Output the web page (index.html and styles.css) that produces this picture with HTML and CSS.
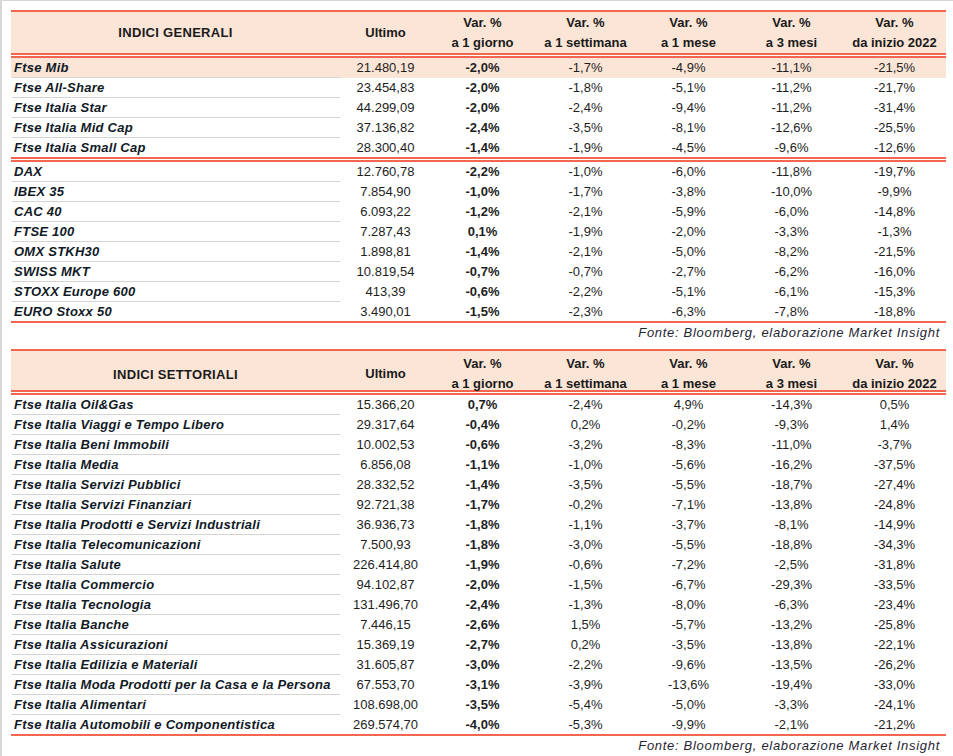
FILE: index.html
```html
<!DOCTYPE html>
<html lang="it">
<head>
<meta charset="utf-8">
<title>Indici</title>
<link rel="stylesheet" href="styles.css">
</head>
<body>
<div class="page">
  <section class="tbl">
    <div class="hdr">
      <div class="h-title">INDICI GENERALI</div>
      <div class="h-one">Ultimo</div>
      <div class="h-two">Var. %<br>a 1 giorno</div>
      <div class="h-two">Var. %<br>a 1 settimana</div>
      <div class="h-two">Var. %<br>a 1 mese</div>
      <div class="h-two">Var. %<br>a 3 mesi</div>
      <div class="h-two">Var. %<br>da inizio 2022</div>
    </div>
    <div class="dbl"></div>
    <div class="grp">
      <div class="row hl"><div class="name">Ftse Mib</div><div class="num">21.480,19</div><div class="num b">-2,0%</div><div class="num">-1,7%</div><div class="num">-4,9%</div><div class="num">-11,1%</div><div class="num">-21,5%</div></div>
      <div class="row"><div class="name">Ftse All-Share</div><div class="num">23.454,83</div><div class="num b">-2,0%</div><div class="num">-1,8%</div><div class="num">-5,1%</div><div class="num">-11,2%</div><div class="num">-21,7%</div></div>
      <div class="row"><div class="name">Ftse Italia Star</div><div class="num">44.299,09</div><div class="num b">-2,0%</div><div class="num">-2,4%</div><div class="num">-9,4%</div><div class="num">-11,2%</div><div class="num">-31,4%</div></div>
      <div class="row"><div class="name">Ftse Italia Mid Cap</div><div class="num">37.136,82</div><div class="num b">-2,4%</div><div class="num">-3,5%</div><div class="num">-8,1%</div><div class="num">-12,6%</div><div class="num">-25,5%</div></div>
      <div class="row"><div class="name">Ftse Italia Small Cap</div><div class="num">28.300,40</div><div class="num b">-1,4%</div><div class="num">-1,9%</div><div class="num">-4,5%</div><div class="num">-9,6%</div><div class="num">-12,6%</div></div>
    </div>
    <div class="dbl"></div>
    <div class="grp">
      <div class="row"><div class="name">DAX</div><div class="num">12.760,78</div><div class="num b">-2,2%</div><div class="num">-1,0%</div><div class="num">-6,0%</div><div class="num">-11,8%</div><div class="num">-19,7%</div></div>
      <div class="row"><div class="name">IBEX 35</div><div class="num">7.854,90</div><div class="num b">-1,0%</div><div class="num">-1,7%</div><div class="num">-3,8%</div><div class="num">-10,0%</div><div class="num">-9,9%</div></div>
      <div class="row"><div class="name">CAC 40</div><div class="num">6.093,22</div><div class="num b">-1,2%</div><div class="num">-2,1%</div><div class="num">-5,9%</div><div class="num">-6,0%</div><div class="num">-14,8%</div></div>
      <div class="row"><div class="name">FTSE 100</div><div class="num">7.287,43</div><div class="num b">0,1%</div><div class="num">-1,9%</div><div class="num">-2,0%</div><div class="num">-3,3%</div><div class="num">-1,3%</div></div>
      <div class="row"><div class="name">OMX STKH30</div><div class="num">1.898,81</div><div class="num b">-1,4%</div><div class="num">-2,1%</div><div class="num">-5,0%</div><div class="num">-8,2%</div><div class="num">-21,5%</div></div>
      <div class="row"><div class="name">SWISS MKT</div><div class="num">10.819,54</div><div class="num b">-0,7%</div><div class="num">-0,7%</div><div class="num">-2,7%</div><div class="num">-6,2%</div><div class="num">-16,0%</div></div>
      <div class="row"><div class="name">STOXX Europe 600</div><div class="num">413,39</div><div class="num b">-0,6%</div><div class="num">-2,2%</div><div class="num">-5,1%</div><div class="num">-6,1%</div><div class="num">-15,3%</div></div>
      <div class="row"><div class="name">EURO Stoxx 50</div><div class="num">3.490,01</div><div class="num b">-1,5%</div><div class="num">-2,3%</div><div class="num">-6,3%</div><div class="num">-7,8%</div><div class="num">-18,8%</div></div>
    </div>
  </section>
  <p class="src">Fonte: Bloomberg, elaborazione Market Insight</p>

  <section class="tbl tbl-second">
    <div class="hdr hdr-short">
      <div class="h-title">INDICI SETTORIALI</div>
      <div class="h-one">Ultimo</div>
      <div class="h-two">Var. %<br>a 1 giorno</div>
      <div class="h-two">Var. %<br>a 1 settimana</div>
      <div class="h-two">Var. %<br>a 1 mese</div>
      <div class="h-two">Var. %<br>a 3 mesi</div>
      <div class="h-two">Var. %<br>da inizio 2022</div>
    </div>
    <div class="dbl"></div>
    <div class="grp">
      <div class="row"><div class="name">Ftse Italia Oil&amp;Gas</div><div class="num">15.366,20</div><div class="num b">0,7%</div><div class="num">-2,4%</div><div class="num">4,9%</div><div class="num">-14,3%</div><div class="num">0,5%</div></div>
      <div class="row"><div class="name">Ftse Italia Viaggi e Tempo Libero</div><div class="num">29.317,64</div><div class="num b">-0,4%</div><div class="num">0,2%</div><div class="num">-0,2%</div><div class="num">-9,3%</div><div class="num">1,4%</div></div>
      <div class="row"><div class="name">Ftse Italia Beni Immobili</div><div class="num">10.002,53</div><div class="num b">-0,6%</div><div class="num">-3,2%</div><div class="num">-8,3%</div><div class="num">-11,0%</div><div class="num">-3,7%</div></div>
      <div class="row"><div class="name">Ftse Italia Media</div><div class="num">6.856,08</div><div class="num b">-1,1%</div><div class="num">-1,0%</div><div class="num">-5,6%</div><div class="num">-16,2%</div><div class="num">-37,5%</div></div>
      <div class="row"><div class="name">Ftse Italia Servizi Pubblici</div><div class="num">28.332,52</div><div class="num b">-1,4%</div><div class="num">-3,5%</div><div class="num">-5,5%</div><div class="num">-18,7%</div><div class="num">-27,4%</div></div>
      <div class="row"><div class="name">Ftse Italia Servizi Finanziari</div><div class="num">92.721,38</div><div class="num b">-1,7%</div><div class="num">-0,2%</div><div class="num">-7,1%</div><div class="num">-13,8%</div><div class="num">-24,8%</div></div>
      <div class="row"><div class="name">Ftse Italia Prodotti e Servizi Industriali</div><div class="num">36.936,73</div><div class="num b">-1,8%</div><div class="num">-1,1%</div><div class="num">-3,7%</div><div class="num">-8,1%</div><div class="num">-14,9%</div></div>
      <div class="row"><div class="name">Ftse Italia Telecomunicazioni</div><div class="num">7.500,93</div><div class="num b">-1,8%</div><div class="num">-3,0%</div><div class="num">-5,5%</div><div class="num">-18,8%</div><div class="num">-34,3%</div></div>
      <div class="row"><div class="name">Ftse Italia Salute</div><div class="num">226.414,80</div><div class="num b">-1,9%</div><div class="num">-0,6%</div><div class="num">-7,2%</div><div class="num">-2,5%</div><div class="num">-31,8%</div></div>
      <div class="row"><div class="name">Ftse Italia Commercio</div><div class="num">94.102,87</div><div class="num b">-2,0%</div><div class="num">-1,5%</div><div class="num">-6,7%</div><div class="num">-29,3%</div><div class="num">-33,5%</div></div>
      <div class="row"><div class="name">Ftse Italia Tecnologia</div><div class="num">131.496,70</div><div class="num b">-2,4%</div><div class="num">-1,3%</div><div class="num">-8,0%</div><div class="num">-6,3%</div><div class="num">-23,4%</div></div>
      <div class="row"><div class="name">Ftse Italia Banche</div><div class="num">7.446,15</div><div class="num b">-2,6%</div><div class="num">1,5%</div><div class="num">-5,7%</div><div class="num">-13,2%</div><div class="num">-25,8%</div></div>
      <div class="row"><div class="name">Ftse Italia Assicurazioni</div><div class="num">15.369,19</div><div class="num b">-2,7%</div><div class="num">0,2%</div><div class="num">-3,5%</div><div class="num">-13,8%</div><div class="num">-22,1%</div></div>
      <div class="row"><div class="name">Ftse Italia Edilizia e Materiali</div><div class="num">31.605,87</div><div class="num b">-3,0%</div><div class="num">-2,2%</div><div class="num">-9,6%</div><div class="num">-13,5%</div><div class="num">-26,2%</div></div>
      <div class="row"><div class="name">Ftse Italia Moda Prodotti per la Casa e la Persona</div><div class="num">67.553,70</div><div class="num b">-3,1%</div><div class="num">-3,9%</div><div class="num">-13,6%</div><div class="num">-19,4%</div><div class="num">-33,0%</div></div>
      <div class="row"><div class="name">Ftse Italia Alimentari</div><div class="num">108.698,00</div><div class="num b">-3,5%</div><div class="num">-5,4%</div><div class="num">-5,0%</div><div class="num">-3,3%</div><div class="num">-24,1%</div></div>
      <div class="row"><div class="name">Ftse Italia Automobili e Componentistica</div><div class="num">269.574,70</div><div class="num b">-4,0%</div><div class="num">-5,3%</div><div class="num">-9,9%</div><div class="num">-2,1%</div><div class="num">-21,2%</div></div>
    </div>
  </section>
  <p class="src">Fonte: Bloomberg, elaborazione Market Insight</p>
</div>
</body>
</html>
```

FILE: styles.css
```css
* {
  box-sizing: border-box;
}

html,
body {
  margin: 0;
  padding: 0;
}

body {
  background: #ffffff;
  border-top: 1px solid #d7d7d7;
  border-left: 2px solid #d7d7d7;
  min-height: 756px;
  font-family: "Liberation Sans", Arial, sans-serif;
  font-size: 13px;
  color: #161616;
}

.page {
  width: 951px;
  padding: 9px 0 0 9px;
}

.tbl {
  width: 935px;
  border-top: 2px solid #f4674e;
  border-bottom: 2px solid #f4674e;
}

.hdr,
.row {
  display: grid;
  grid-template-columns: 329px 91px repeat(5, 103px);
}

.hdr {
  height: 41px;
  background: #fbe5d6;
  font-weight: bold;
  align-items: center;
  text-align: center;
  color: #1a1a1a;
}

.hdr-short {
  height: 39px;
  padding-top: 3px;
}

.h-title {
  letter-spacing: 0.3px;
}

.h-one {
  line-height: 20px;
}

.h-two {
  line-height: 20px;
}

.dbl {
  height: 5px;
  border-top: 2px solid #f4674e;
  border-bottom: 2px solid #f4674e;
}

.row {
  height: 20px;
  line-height: 19px;
}

.grp .row:last-child {
  height: 19px;
}

.grp .row:last-child .name {
  border-bottom: 0;
}

.hl {
  background: #fbe5d6;
}

.name {
  margin-left: 1px;
  padding-left: 2px;
  font-weight: bold;
  font-style: italic;
  letter-spacing: 0.25px;
  white-space: nowrap;
  border-bottom: 1px solid #d4d4d4;
  color: #111a26;
}

.num {
  text-align: center;
  color: #1e1e1e;
}

.b {
  font-weight: bold;
}

.src {
  margin: 0;
  width: 935px;
  height: 26px;
  padding-right: 6px;
  line-height: 20px;
  text-align: right;
  font-style: italic;
  letter-spacing: 0.7px;
  color: #1f2633;
}
```
